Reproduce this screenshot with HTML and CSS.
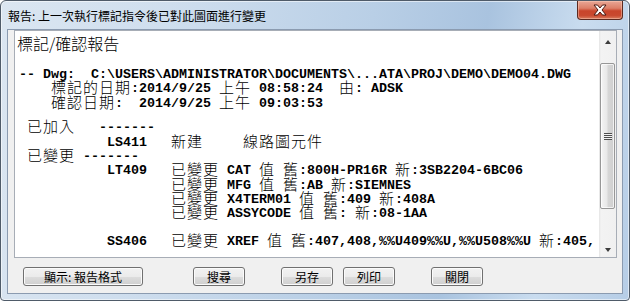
FILE: index.html
```html
<!DOCTYPE html>
<html>
  <head>
    <meta charset="UTF-8" />
    <link rel="stylesheet" href="styles.css">
  </head>
  <body>
    <div class="window">
      <div class="titlebar">
        <div class="title">報告: 上一次執行標記指令後已對此圖面進行變更</div>
        <button class="close-btn" title="關閉">
          <svg width="16" height="12" viewBox="0 0 16 12">
            <path d="M2 1 L5.5 1 L8 4 L10.5 1 L14 1 L10 6 L14 11 L10.5 11 L8 8 L5.5 11 L2 11 L6 6 Z" fill="#fff" stroke="#4a1a12" stroke-width="1" stroke-linejoin="round" />
          </svg>
        </button>
      </div>

      <div class="client">
        <div class="report">
          <div class="report-text">
            <div class="heading">標記/確認報告</div>
            <div class="ln first">-- Dwg:  C:\USERS\ADMINISTRATOR\DOCUMENTS\...ATA\PROJ\DEMO\DEMO04.DWG</div>
            <div class="ln">    <span class="c">標記的日期</span>:2014/9/25 <span class="c">上午</span> 08:58:24  <span class="c">由</span>: ADSK</div>
            <div class="ln">    <span class="c">確認日期</span>:  2014/9/25 <span class="c">上午</span> 09:03:53</div>
            <div class="ln section">&nbsp;<span class="c">已加入</span>   -------</div>
            <div class="ln">           LS411   <span class="c">新建</span>     <span class="c">線路圖元件</span></div>
            <div class="ln">&nbsp;<span class="c">已變更</span> -------</div>
            <div class="ln">           LT409   <span class="c">已變更</span> CAT <span class="c">值</span> <span class="c">舊</span>:800H-PR16R <span class="c">新</span>:3SB2204-6BC06</div>
            <div class="ln">                   <span class="c">已變更</span> MFG <span class="c">值</span> <span class="c">舊</span>:AB <span class="c">新</span>:SIEMNES</div>
            <div class="ln">                   <span class="c">已變更</span> X4TERM01 <span class="c">值</span> <span class="c">舊</span>:409 <span class="c">新</span>:408A</div>
            <div class="ln">                   <span class="c">已變更</span> ASSYCODE <span class="c">值</span> <span class="c">舊</span>: <span class="c">新</span>:08-1AA</div>
            <div class="ln block">           SS406   <span class="c">已變更</span> XREF <span class="c">值</span> <span class="c">舊</span>:407,408,%%U409%%U,%%U508%%U <span class="c">新</span>:405,</div>
          </div>
          <div class="scrollbar">
            <div class="sb-up"><span class="arrow-up"></span></div>
            <div class="sb-track">
              <div class="sb-thumb"><span class="grip"></span></div>
            </div>
            <div class="sb-down"><span class="arrow-down"></span></div>
          </div>
        </div>

        <div class="buttons">
          <button class="btn btn-format">顯示: 報告格式</button>
          <button class="btn btn-find">搜尋</button>
          <button class="btn btn-save">另存</button>
          <button class="btn btn-print">列印</button>
          <button class="btn btn-close">關閉</button>
        </div>
      </div>
    </div>
  </body>
</html>
```

FILE: styles.css
```css
* {
  box-sizing: border-box;
}
body {
  margin: 0;
  width: 630px;
  height: 301px;
  overflow: hidden;
  font-family: "Noto Sans CJK TC", "Liberation Sans", sans-serif;
  background: #fff;
}
.window {
  width: 630px;
  height: 301px;
  border: 1px solid #4f5b69;
  border-radius: 6px 6px 4px 4px;
  padding: 0 6px 6px;
  display: flex;
  flex-direction: column;
  background: linear-gradient(
    100deg,
    #dbe6f1 0%,
    #cfdeee 25%,
    #b9cfe6 55%,
    #a9c3df 72%,
    #c9dcef 86%,
    #b6cde6 100%
  );
  box-shadow: inset 0 0 0 1px rgba(255, 255, 255, 0.55);
}
.titlebar {
  height: 28px;
  display: flex;
  align-items: flex-start;
}
.title {
  font-size: 12px;
  line-height: 14px;
  margin: 8px 0 0 1px;
  color: #000;
  white-space: nowrap;
}
.close-btn {
  margin-left: auto;
  width: 46px;
  height: 19px;
  padding: 0;
  border: 1px solid #5c2a20;
  border-top: none;
  border-radius: 0 0 4px 4px;
  display: flex;
  align-items: center;
  justify-content: center;
  background: linear-gradient(
    #e8a796 0%,
    #dc7f68 40%,
    #c9452b 55%,
    #c9492f 80%,
    #d97d5f 100%
  );
  box-shadow: inset 0 0 0 1px rgba(255, 210, 190, 0.45);
}
.client {
  flex: 1;
  border: 1px solid #8b9bb0;
  background: #f0f0f0;
  padding: 0 5px 7px 6px;
  display: flex;
  flex-direction: column;
}
.report {
  height: 228px;
  border: 1px solid #a7adb6;
  background: #fff;
  display: flex;
}
.report-text {
  flex: 1;
  padding: 2px 0 0 4px;
  font-family: "Liberation Mono", "Noto Sans CJK TC", monospace;
  font-weight: bold;
  font-size: 13.333px;
  color: #000;
  overflow: hidden;
}
.heading {
  font-family: "Noto Sans CJK TC", sans-serif;
  font-weight: 300;
  font-size: 16px;
  height: 20px;
  line-height: 20px;
  margin-left: -2px;
}
.ln {
  height: 14.3px;
  line-height: 14.3px;
  white-space: pre;
}
.ln.first {
  margin-top: 15px;
}
.ln.section {
  margin-top: 10.6px;
}
.ln.block {
  margin-top: 13.4px;
}
.c {
  font-family: "Noto Sans CJK TC", sans-serif;
  font-weight: 300;
  font-size: 15px;
  letter-spacing: 1px;
  line-height: 0;
  vertical-align: -1px;
}
.scrollbar {
  width: 17px;
  display: flex;
  flex-direction: column;
  background: linear-gradient(to right, #e4e4e4 0, #f3f3f3 2px, #f0f0f0 100%);
}
.sb-up,
.sb-down {
  display: flex;
  justify-content: center;
  align-items: center;
}
.sb-up {
  height: 22px;
}
.sb-down {
  height: 15px;
}
.arrow-up {
  width: 0;
  height: 0;
  border-left: 3.5px solid transparent;
  border-right: 3.5px solid transparent;
  border-bottom: 4px solid #3c3c3c;
}
.arrow-down {
  width: 0;
  height: 0;
  border-left: 3.5px solid transparent;
  border-right: 3.5px solid transparent;
  border-top: 4px solid #3c3c3c;
}
.sb-track {
  flex: 1;
  padding: 10px 1px 0 1px;
}
.sb-thumb {
  height: 146px;
  border: 1px solid #979797;
  border-radius: 2px;
  background: linear-gradient(to right, #f4f4f4 0%, #e8e8e8 45%, #d6d6d6 55%, #cfcfcf 100%);
  box-shadow: inset 0 0 0 1px rgba(255, 255, 255, 0.7);
  display: flex;
  align-items: center;
  justify-content: center;
}
.grip {
  width: 8px;
  height: 7px;
  background: repeating-linear-gradient(#4e4e4e 0, #4e4e4e 1px, #f2f2f2 1px, #f2f2f2 2px);
}
.buttons {
  display: flex;
  margin-top: 9px;
  height: 19px;
}
.btn {
  height: 19px;
  padding: 0;
  border: 1px solid #707070;
  border-radius: 3px;
  font-family: "Noto Sans CJK TC", sans-serif;
  font-size: 12px;
  line-height: 15px;
  color: #000;
  background: linear-gradient(#f2f2f2 0%, #ebebeb 50%, #dddddd 51%, #cfcfcf 100%);
  box-shadow: inset 0 0 0 1px #fbfbfb;
}
.btn-format {
  width: 120px;
  margin-left: 9px;
}
.btn-find {
  width: 52px;
  margin-left: 50px;
}
.btn-save {
  width: 52px;
  margin-left: 36px;
}
.btn-print {
  width: 52px;
  margin-left: 10px;
}
.btn-close {
  width: 52px;
  margin-left: 36px;
}
```
